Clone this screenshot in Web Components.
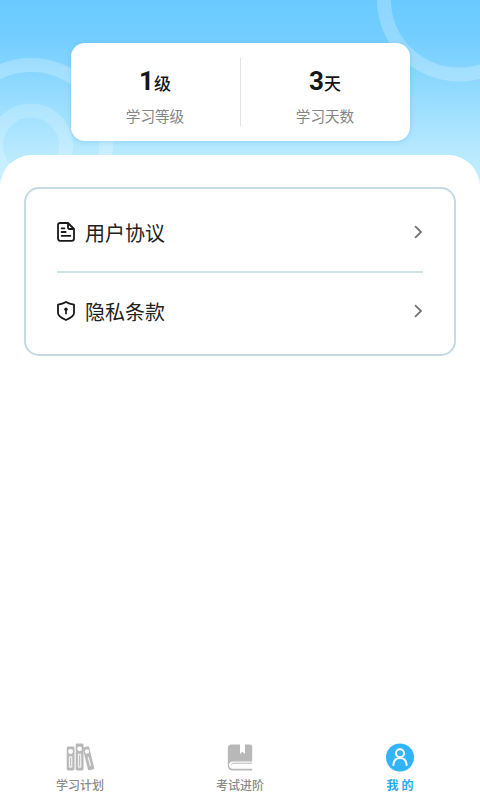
<!DOCTYPE html>
<html lang="zh-CN">
<head>
<meta charset="utf-8">
<title>我的</title>
<style>
html,body{margin:0;height:100%;background:#fff}
body{font-family:Roboto,"Noto Sans CJK SC",sans-serif;color:#161616}
</style>
</head>
<body>
<profile-page></profile-page>
<script>
function define(name, html){
  const t=document.createElement('template');
  t.innerHTML=html;
  customElements.define(name,class extends HTMLElement{
    constructor(){super();this.attachShadow({mode:'open'}).append(t.content.cloneNode(true));}
  });
}
define('stat-item',`<style>
:host{flex:1;display:flex;flex-direction:column;align-items:center;padding-top:23px}
.v{font-weight:700;font-size:26px;line-height:30px;height:30px;white-space:nowrap}
.v ::slotted(small){font-size:17px;font-weight:500}
.l{font-size:14.6px;line-height:20px;margin-top:11px;color:#858585}
</style><div class="v"><slot name="value"></slot><slot name="unit"></slot></div><div class="l"><slot></slot></div>`);
define('stat-card',`<style>
:host{display:flex;box-sizing:border-box;width:339px;height:98.5px;margin:42.5px auto 0;background:#fff;border-radius:14px;box-shadow:0 1px 5px rgba(50,145,190,.22);position:relative}
i{width:1px;height:68px;margin-top:15px;background:#e4e4e4}
</style><slot name="a"></slot><i></i><slot name="b"></slot>`);
define('page-hero',`<style>
:host{display:grid;height:190px;background:linear-gradient(#6acaff 0,#74ceff 40px,#b9eaff 155px,#c4efff)}
svg,.c{grid-area:1/1}
svg{display:block}
</style><svg width="480" height="190" fill="none" stroke="#fff" stroke-width="14">
<g stroke-opacity=".24"><circle cx="459" cy="-.5" r="75"/><circle cx="31" cy="140.5" r="75.5"/></g><circle cx="31" cy="145.5" r="35" stroke-opacity=".2"/></svg><div class="c"><slot></slot></div>`);
define('list-row',`<style>
:host{display:flex;align-items:center;height:78px}
.t{flex:1;font-size:20px;line-height:28px;margin-left:9px;padding-top:4px;color:#222}
svg{display:block}
</style><slot name="icon"></slot><span class="t"><slot></slot></span><svg width="9" height="14" fill="none" stroke="#737373" stroke-width="1.8"><path d="M1 1.2 7 7 1 12.8"/></svg>`);
define('list-panel',`<style>
:host{display:block;box-sizing:border-box;height:169px;margin:0 24px;padding:4px 31px 0 30px;border:2px solid #c6dae3;border-radius:15px}
hr{border:0;height:2px;margin:0 0 -1px 1px;background:#cfe3e6}
</style><slot name="first"></slot><hr><slot name="second"></slot>`);
define('page-sheet',`<style>
:host{display:block;flex:1;background:#fff;border-radius:32px 32px 0 0;margin-top:-35px;padding-top:32px;z-index:1}
</style><slot></slot>`);
define('tab-item',`<style>
:host{flex:1;display:flex;flex-direction:column;align-items:center;color:#8b8b8b;font-size:12px;font-weight:500;line-height:18px}
:host([active]){color:#29a9f0;font-weight:700}
.i{height:30px;margin-bottom:5px}
::slotted(svg){display:block}
</style><div class="i"><slot name="icon"></slot></div><span><slot></slot></span>`);
define('tab-bar',`<style>:host{display:flex;height:58px}</style><slot></slot>`);
define('profile-page',`<style>
:host{display:flex;flex-direction:column;width:480px;height:800px;overflow:hidden;background:#fff}
svg{display:block}
</style>
<page-hero><stat-card>
<stat-item slot="a"><span slot="value">1</span><small slot="unit">级</small>学习等级</stat-item>
<stat-item slot="b"><span slot="value">3</span><small slot="unit">天</small>学习天数</stat-item>
</stat-card></page-hero>
<page-sheet><list-panel>
<list-row slot="first"><svg slot="icon" width="20" height="20" fill="none" stroke="#181818" stroke-width="1.8" stroke-linejoin="round" stroke-linecap="round"><path d="M4.300 1H12l6 6v9.500q0 2.300-2.300 2.300H4.300Q2 18.800 2 16.500V3.300Q2 1 4.300 1ZM12 1v4.500Q12 7 13.500 7H18M5.600 6.300h2.800M5.600 10h4.100M5.600 13.800h8.800"/></svg>用户协议</list-row>
<list-row slot="second"><svg slot="icon" width="20" height="20" fill="none" stroke="#181818" stroke-width="1.800" stroke-linejoin="round"><path d="M10 1C7.500 2.600 5 3.300 2 3.700V12C2 15.500 6 17.300 10 19C14 17.300 18 15.500 18 12V3.700C15 3.300 12.500 2.600 10 1Z"/><path d="M10 9v4.300" stroke-width="1.700"/><circle cx="10" cy="8.300" r="1.700" fill="#181818" stroke="none"/></svg>隐私条款</list-row>
</list-panel></page-sheet>
<tab-bar>
<tab-item><svg slot="icon" width="30" height="30" viewBox="0 0 30 30"><g fill="#b8b8b8"><rect x="1.700" y="4.500" width="7.800" height="24" rx="1.400"/><rect x="10.700" y="1.500" width="7.800" height="27" rx="1.400"/><rect x="20.200" y="4.500" width="6.500" height="23.500" rx="1.300" transform="rotate(-14 23.500 16)"/></g><g fill="#fff"><circle cx="5.600" cy="9.500" r="2.400"/><circle cx="14.600" cy="6.800" r="2.400"/><circle cx="22" cy="9.500" r="2.200"/></g><g fill="none" stroke="#fff" stroke-opacity=".8" stroke-width="1.300"><rect x="4.500" y="15" width="2.200" height="10"/><rect x="13.500" y="12.500" width="2.200" height="12.500"/><path d="m23.200 15 2.300 9"/></g></svg>学习计划</tab-item>
<tab-item><svg slot="icon" width="30" height="30" viewBox="0 0 30 30"><path fill="#b8b8b8" d="M6.500 2.500H15V12l2.500-2.200L20 12V2.500h5q2.200 0 2.200 2.200V19.500H8a4 3.600 0 0 0 0 7.200h19.200v1.800H8Q2.800 28.500 2.800 23V6Q2.800 2.500 6.500 2.500Z"/><path d="M27.200 21.200H8.500a2.200 2.200 0 0 0-2 1.500" fill="none" stroke="#b8b8b8" stroke-width="1"/></svg>考试进阶</tab-item>
<tab-item active><svg slot="icon" width="30" height="30" viewBox="0 0 30 30"><circle cx="15" cy="15.500" r="14" fill="#32b4fa"/><g fill="none" stroke="#fff" stroke-width="2.100" stroke-linecap="round"><circle cx="15" cy="11.200" r="4"/><path d="M8.400 23q.5-7 6.600-7t6.600 7"/></g></svg>我 的</tab-item>
</tab-bar>`);
</script>
</body>
</html>
